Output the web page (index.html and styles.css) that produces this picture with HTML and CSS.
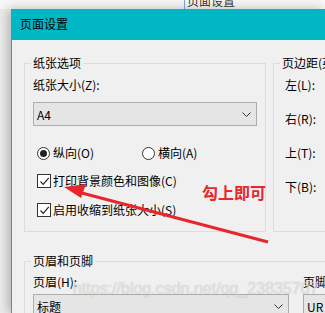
FILE: index.html
```html
<!DOCTYPE html>
<html lang="zh-CN">
<head>
    <meta charset="UTF-8">
    <title>页面设置</title>
    <link rel="stylesheet" href="styles.css">
</head>
<body>
    <div class="backwin">
        <span class="backwin-title">页面设置</span>
    </div>

    <div class="dialog">
        <div class="titlebar">页面设置</div>
        <div class="content">
            <div class="row">
                <div class="group paper">
                    <div class="legend"><span>纸张选项</span></div>
                    <div class="label first">纸张大小(Z):</div>
                    <div class="select paper-select">
                        <span>A4</span>
                        <svg class="chevron" width="9" height="5" viewBox="0 0 9 5"><polyline points="0.5,0.5 4.5,4.5 8.5,0.5" fill="none" stroke="#333" stroke-width="1"/></svg>
                    </div>
                    <div class="radios">
                        <label class="opt"><span class="radio checked"></span>纵向(O)</label>
                        <label class="opt"><span class="radio"></span>横向(A)</label>
                    </div>
                    <label class="opt check-one"><span class="checkbox"><svg width="11" height="11" viewBox="0 0 11 11"><polyline points="1.5,5.5 4.2,8.3 9.8,1.8" fill="none" stroke="#222" stroke-width="1.2"/></svg></span>打印背景颜色和图像(C)</label>
                    <label class="opt check-two"><span class="checkbox"><svg width="11" height="11" viewBox="0 0 11 11"><polyline points="1.5,5.5 4.2,8.3 9.8,1.8" fill="none" stroke="#222" stroke-width="1.2"/></svg></span>启用收缩到纸张大小(S)</label>
                </div>
                <div class="group margins">
                    <div class="legend"><span>页边距(英寸)</span></div>
                    <div class="label first">左(L):</div>
                    <div class="label">右(R):</div>
                    <div class="label">上(T):</div>
                    <div class="label">下(B):</div>
                </div>
            </div>

            <div class="group header-footer">
                <div class="legend"><span>页眉和页脚</span></div>
                <div class="hf-row">
                    <div class="hf-col">
                        <div class="label hf-label">页眉(H):</div>
                        <div class="select hf-select">
                            <span>标题</span>
                            <svg class="chevron" width="9" height="5" viewBox="0 0 9 5"><polyline points="0.5,0.5 4.5,4.5 8.5,0.5" fill="none" stroke="#333" stroke-width="1"/></svg>
                        </div>
                    </div>
                    <div class="hf-col second">
                        <div class="label hf-label">页脚</div>
                        <div class="select hf-select">
                            <span>UR</span>
                        </div>
                    </div>
                </div>
            </div>
        </div>
    </div>

    <!-- 标注 -->
    <svg class="annot" width="325" height="313" viewBox="0 0 325 313">
        <line x1="78" y1="192" x2="268" y2="242" stroke="#e8262d" stroke-width="3"/>
        <polygon points="64,187 86,184 81,198" fill="#e8262d"/>
    </svg>
    <div class="note">勾上即可</div>
    <div class="watermark">https://blog.csdn.net/qq_23835707</div>
</body>
</html>
```

FILE: styles.css
```css
body {
    margin: 0;
    width: 325px;
    height: 313px;
    overflow: hidden;
    position: relative;
    background: #ececec;
    font-family: "Noto Sans CJK SC", "Liberation Sans", sans-serif;
    font-size: 12px;
    color: #000;
}
.backwin {
    position: absolute;
    left: 0;
    top: 0;
    width: 325px;
    height: 9px;
    background: #f7f7f7;
    overflow: hidden;
}
.backwin-title {
    position: absolute;
    left: 184px;
    top: -6px;
    height: 15px;
    padding-left: 2px;
    border-left: 1px solid #7aa7d8;
    line-height: 14px;
    color: #333;
}
.dialog {
    position: absolute;
    left: 11px;
    top: 9px;
    width: 313px;
    height: 304px;
    overflow: hidden;
    background: #f0f0f0;
    border-left: 1px solid #00b7c3;
    box-shadow: -3px 0 10px rgba(0, 0, 0, 0.25);
}
.titlebar {
    height: 31px;
    line-height: 30px;
    padding-left: 8px;
    background: #00b7c3;
}
.content {
    padding: 23px 0 0 12px;
}
.row {
    display: flex;
    gap: 7px;
}
.group {
    border: 1px solid #dcdcdc;
    padding: 0 8px 13px;
}
.legend {
    height: 16px;
    line-height: 16px;
    margin-top: -9px;
    white-space: nowrap;
}
.legend span {
    background: #f0f0f0;
    padding: 0 2px;
    margin-left: -2px;
}
.label {
    height: 16px;
    line-height: 16px;
    margin-top: 18px;
    white-space: nowrap;
}
.label.first {
    margin-top: 6px;
}
.paper {
    width: 224px;
    flex: none;
}
.margins {
    width: 60px;
    flex: none;
    border-right: none;
}
.margins .label {
    margin-left: 3px;
}
.select {
    height: 22px;
    border: 1px solid #adadad;
    background: #e5e5e5;
    display: flex;
    align-items: center;
    justify-content: space-between;
    padding: 0 5px 0 3px;
}
.paper-select {
    margin-top: 9px;
}
.chevron {
    display: block;
}
.opt {
    display: flex;
    align-items: center;
    height: 16px;
    line-height: 16px;
}
.radios {
    display: flex;
    margin-top: 19px;
    padding-left: 4px;
}
.radios .opt {
    width: 105px;
}
.radio {
    width: 11px;
    height: 11px;
    border: 1px solid #333;
    border-radius: 50%;
    background: #fff;
    margin-right: 3px;
    position: relative;
}
.radio.checked::after {
    content: "";
    position: absolute;
    left: 2px;
    top: 2px;
    width: 7px;
    height: 7px;
    border-radius: 50%;
    background: #222;
}
.checkbox {
    width: 12px;
    height: 12px;
    border: 1px solid #333;
    background: #fff;
    margin-right: 2px;
    display: flex;
    align-items: center;
    justify-content: center;
}
.checkbox svg {
    display: block;
}
.check-one {
    margin-top: 12px;
    padding-left: 4px;
}
.check-two {
    margin-top: 13px;
    padding-left: 4px;
}
.header-footer {
    margin-top: 29px;
    height: 60px;
    border-right: none;
}
.hf-row {
    display: flex;
    gap: 14px;
}
.hf-col {
    width: 256px;
    flex: none;
}
.hf-col.second {
    width: 40px;
}
.hf-col.second .select {
    border-right: none;
}
.hf-label {
    margin-top: 5px;
}
.hf-select {
    margin-top: 4px;
}
.annot {
    position: absolute;
    left: 0;
    top: 0;
}
.note {
    position: absolute;
    left: 202px;
    top: 182px;
    font-size: 16px;
    font-weight: bold;
    color: #e8262d;
    line-height: 20px;
}
.watermark {
    position: absolute;
    left: 73px;
    top: 280px;
    font-family: "Liberation Sans", sans-serif;
    font-size: 16px;
    color: rgba(255, 255, 255, 0.55);
    text-shadow: 0 0 1px rgba(120, 120, 120, 0.5);
    white-space: nowrap;
}
```
